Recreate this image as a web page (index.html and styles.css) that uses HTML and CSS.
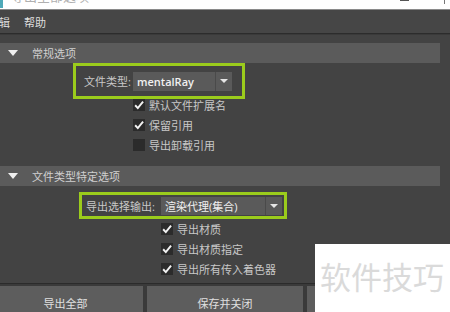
FILE: index.html
```html
<!DOCTYPE html>
<html>
<head>
    <title>导出全部选项</title>
    <meta charset="UTF-8">
    <link rel="stylesheet" href="styles.css">
</head>
<body>
    <div class="titlebar">
        <span class="app-icon"></span>
        <span class="title-text">导出全部选项</span>
        <span class="win-min"></span>
        <span class="win-max"></span>
    </div>

    <div class="menubar">
        <span class="menu-item menu-cut">辑</span>
        <span class="menu-item">帮助</span>
    </div>
    <div class="divider"></div>

    <div class="main">
        <div class="section-header">
            <span class="tri"></span>
            <span class="section-title">常规选项</span>
        </div>

        <div class="highlight hl-type">
            <span class="field-label">文件类型:</span>
            <div class="dropdown dd-type">
                <span class="dd-value">mentalRay</span>
                <span class="dd-arrow"><span class="caret"></span></span>
            </div>
        </div>

        <div class="check-list list-general">
            <div class="check-row">
                <span class="box on"><svg viewBox="0 0 10 10"><polyline points="1.8,5.2 4,7.6 8.4,2.2"/></svg></span>
                <span>默认文件扩展名</span>
            </div>
            <div class="check-row">
                <span class="box on"><svg viewBox="0 0 10 10"><polyline points="1.8,5.2 4,7.6 8.4,2.2"/></svg></span>
                <span>保留引用</span>
            </div>
            <div class="check-row">
                <span class="box"></span>
                <span>导出卸载引用</span>
            </div>
        </div>

        <div class="section-header second">
            <span class="tri"></span>
            <span class="section-title">文件类型特定选项</span>
        </div>

        <div class="highlight hl-output">
            <span class="field-label">导出选择输出:</span>
            <div class="dropdown dd-output">
                <span class="dd-value">渲染代理(集合)</span>
                <span class="dd-arrow"><span class="caret"></span></span>
            </div>
        </div>

        <div class="check-list list-specific">
            <div class="check-row">
                <span class="box on"><svg viewBox="0 0 10 10"><polyline points="1.8,5.2 4,7.6 8.4,2.2"/></svg></span>
                <span>导出材质</span>
            </div>
            <div class="check-row">
                <span class="box on"><svg viewBox="0 0 10 10"><polyline points="1.8,5.2 4,7.6 8.4,2.2"/></svg></span>
                <span>导出材质指定</span>
            </div>
            <div class="check-row">
                <span class="box on"><svg viewBox="0 0 10 10"><polyline points="1.8,5.2 4,7.6 8.4,2.2"/></svg></span>
                <span>导出所有传入着色器</span>
            </div>
        </div>
    </div>

    <div class="footer">
        <div class="btn btn-export">导出全部</div>
        <div class="btn btn-save">保存并关闭</div>
        <div class="btn btn-close"></div>
    </div>

    <div class="watermark">软件技巧</div>
</body>
</html>
```

FILE: styles.css
```css
body {
    font-family: "Open Sans", "Noto Sans CJK SC", sans-serif;
    font-size: 11px;
    margin: 0;
    width: 450px;
    height: 312px;
    overflow: hidden;
    background: #444444;
    color: #cfcfcf;
    display: flex;
    flex-direction: column;
    position: relative;
}

.titlebar {
    height: 9px;
    background: #ffffff;
    border-bottom: 1px solid #8a8a8a;
    display: flex;
    align-items: flex-start;
    overflow: hidden;
    flex-shrink: 0;
}
.app-icon { width: 3px; height: 8px; background: #4fa9b8; }
.title-text { margin: -12px 0 0 8px; font-size: 13px; line-height: 16px; color: #b0b0b0; }
.win-min { width: 9px; height: 1px; background: #555; margin-left: auto; }
.win-max { width: 1px; height: 4px; background: #777; margin: 0 5px 0 35px; }

.menubar {
    height: 23px;
    background: #464646;
    display: flex;
    align-items: center;
    color: #dedede;
    flex-shrink: 0;
}
.menu-item { margin-right: 14px; }
.menu-cut { margin-left: -1px; }

.divider {
    height: 0;
    border-top: 1px solid #2c2c2c;
    border-bottom: 1px solid #3a3a3a;
    flex-shrink: 0;
}

.main { flex: 1; padding-top: 8px; background: #434343; }

.section-header {
    height: 20px;
    margin-right: 10px;
    background: #5b5b5b;
    display: flex;
    align-items: center;
    padding-left: 8px;
    color: #d0d0d0;
}
.section-header.second { margin-top: 11px; }
.tri {
    width: 0;
    height: 0;
    border-left: 5px solid transparent;
    border-right: 5px solid transparent;
    border-top: 6px solid #f0f0f0;
    margin-right: 14px;
}

.highlight {
    border: 3px solid #9bcc1c;
    box-sizing: border-box;
    display: flex;
    align-items: center;
    position: relative;
    z-index: 1;
}
.hl-type { margin-left: 73px; width: 172px; height: 36px; padding-left: 8px; }
.hl-output { margin: 6px 0 0 79px; width: 208px; height: 27px; padding-left: 4px; }

.field-label { color: #c8c8c8; }
.hl-type .field-label { width: 49px; }
.hl-output .field-label { width: 75px; }

.dropdown {
    display: flex;
    align-items: center;
    background: #5a5a5a;
    color: #f0f0f0;
}
.dd-type { width: 99px; height: 19px; }
.dd-output { width: 121px; height: 18px; }
.dd-value { flex: 1; padding-left: 4px; }
.dd-type .dd-value { font-weight: 600; }
.dd-arrow {
    width: 16px;
    align-self: stretch;
    border-left: 1px solid #4a4a4a;
    display: flex;
    align-items: center;
    justify-content: center;
}
.caret {
    width: 0;
    height: 0;
    border-left: 4px solid transparent;
    border-right: 4px solid transparent;
    border-top: 4px solid #e6e6e6;
}

.check-list { display: flex; flex-direction: column; }
.list-general { margin: -4px 0 0 133px; }
.list-specific { margin-left: 161px; }
.check-row { height: 20px; display: flex; align-items: center; color: #c8c8c8; }
.box {
    width: 12px;
    height: 12px;
    background: #2b2b2b;
    margin-right: 4px;
    display: flex;
}
.box svg { width: 12px; height: 12px; }
.box polyline { fill: none; stroke: #f2f2f2; stroke-width: 1.6; }

.footer {
    flex-shrink: 0;
    height: 26px;
    border-top: 1px solid #2b2b2b;
    padding-top: 2px;
    background: #3a3a3a;
    display: flex;
    gap: 4px;
    overflow: hidden;
}
.btn {
    height: 34px;
    background: #5d5d5d;
    color: #e0e0e0;
    display: flex;
    justify-content: center;
    align-items: center;
    flex-shrink: 0;
}
.btn-export { width: 131px; padding-right: 12px; }
.btn-save { width: 156px; }
.btn-close { flex: 1; }

.watermark {
    position: absolute;
    left: 315px;
    top: 244px;
    right: 0;
    bottom: 0;
    background: #ffffff;
    color: #dadada;
    font-family: "Noto Sans CJK SC", sans-serif;
    font-size: 31px;
    line-height: 31px;
    padding: 16px 0 0 5px;
}
```
